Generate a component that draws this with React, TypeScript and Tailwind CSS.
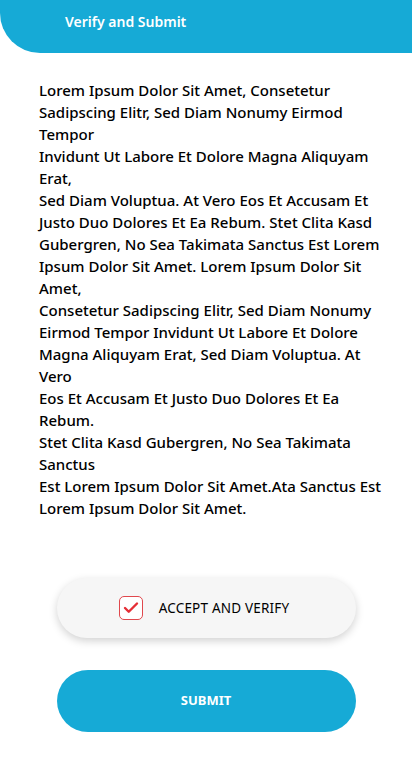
import { Check } from 'lucide-react'

const lines = [
  'Lorem Ipsum Dolor Sit Amet, Consetetur',
  'Sadipscing Elitr, Sed Diam Nonumy Eirmod',
  'Tempor',
  'Invidunt Ut Labore Et Dolore Magna Aliquyam',
  'Erat,',
  'Sed Diam Voluptua. At Vero Eos Et Accusam Et',
  'Justo Duo Dolores Et Ea Rebum. Stet Clita Kasd',
  'Gubergren, No Sea Takimata Sanctus Est Lorem',
  'Ipsum Dolor Sit Amet. Lorem Ipsum Dolor Sit',
  'Amet,',
  'Consetetur Sadipscing Elitr, Sed Diam Nonumy',
  'Eirmod Tempor Invidunt Ut Labore Et Dolore',
  'Magna Aliquyam Erat, Sed Diam Voluptua. At',
  'Vero',
  'Eos Et Accusam Et Justo Duo Dolores Et Ea',
  'Rebum.',
  'Stet Clita Kasd Gubergren, No Sea Takimata',
  'Sanctus',
  'Est Lorem Ipsum Dolor Sit Amet.Ata Sanctus Est',
  'Lorem Ipsum Dolor Sit Amet.',
]

export default function App() {
  return (
    <div className="min-h-[778px] w-[412px] bg-white font-['Noto_Sans',sans-serif]">
      <header className="h-[53px] bg-[#16aad6] rounded-bl-[40px] pl-[65px] pt-[12px]">
        <h1 className="text-white text-[14px] leading-[20px] font-semibold">Verify and Submit</h1>
      </header>

      <div className="pt-[26px] pl-[39px] pr-[10px] text-black text-[15px] leading-[22px] font-medium">
        {lines.map((l, i) => (
          <p key={i} className="whitespace-nowrap">{l}</p>
        ))}
      </div>

      <div className="flex flex-col items-center gap-[32px] mt-[59px]">
        <div className="w-[299px] h-[60px] rounded-full bg-[#f6f6f6] shadow-[0_3px_8px_rgba(0,0,0,0.18)] flex items-center justify-center gap-[16px] pr-[4px]">
          <span className="w-[24px] h-[24px] rounded-[5px] border-[1.5px] border-[#e0484d] bg-white flex items-center justify-center">
            <Check className="w-[18px] h-[18px] text-[#e52e36]" strokeWidth={3.2} />
          </span>
          <span className="text-[13.5px] text-black tracking-[0.2px]">ACCEPT AND VERIFY</span>
        </div>

        <button className="w-[299px] h-[62px] rounded-full bg-[#16aad6] text-white text-[13px] font-bold">
          SUBMIT
        </button>
      </div>
    </div>
  )
}
